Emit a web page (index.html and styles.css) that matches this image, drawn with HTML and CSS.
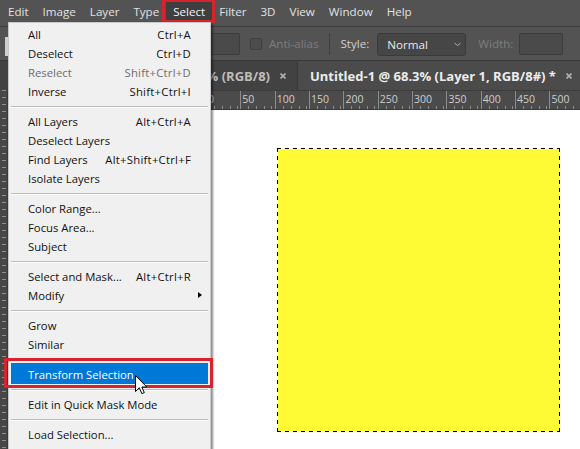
FILE: index.html
```html
<!DOCTYPE html>
<html lang="en">
<head>
<meta charset="UTF-8">
<title>Select menu</title>
<link rel="stylesheet" href="styles.css">
</head>
<body>
<div class="app">
  <div class="menubar">
    <span class="mb-item">Edit</span>
    <span class="mb-item">Image</span>
    <span class="mb-item">Layer</span>
    <span class="mb-item">Type</span>
    <span class="mb-item open">Select</span>
    <span class="mb-item">Filter</span>
    <span class="mb-item">3D</span>
    <span class="mb-item">View</span>
    <span class="mb-item">Window</span>
    <span class="mb-item">Help</span>
  </div>

  <div class="optionsbar">
    <div class="tool-stub"></div>
    <div class="field feather"></div>
    <span class="check"></span>
    <span class="opt-label dim">Anti-alias</span>
    <div class="vsep"></div>
    <span class="opt-label">Style:</span>
    <div class="dropdown-field">
      <span>Normal</span>
      <svg width="7" height="5" viewBox="0 0 7 5"><polyline points="0.5,0.8 3.5,3.8 6.5,0.8" fill="none" stroke="#b4b4b4" stroke-width="1"/></svg>
    </div>
    <span class="opt-label dim">Width:</span>
    <div class="field width"></div>
  </div>

  <div class="tabbar">
    <div class="tab">
      <span class="tab-title">% (RGB/8)</span>
      <svg class="tab-close" width="6" height="6" viewBox="0 0 6 6"><path d="M0.5 0.5L5.5 5.5M5.5 0.5L0.5 5.5" stroke="#b0b0b0" stroke-width="1.6"/></svg>
    </div>
    <div class="tab active">
      <span class="tab-title">Untitled-1 @ 68.3% (Layer 1, RGB/8#) *</span>
      <svg class="tab-close" width="6" height="6" viewBox="0 0 6 6"><path d="M0.5 0.5L5.5 5.5M5.5 0.5L0.5 5.5" stroke="#b0b0b0" stroke-width="1.6"/></svg>
    </div>
  </div>

  <div class="workspace">
    <div class="vruler"></div>
    <div class="doc">
      <div class="hruler">
        <span>0</span><span>50</span><span>100</span><span>150</span><span>200</span><span>250</span>
        <span>300</span><span>350</span><span>400</span><span>450</span><span>500</span><span></span>
      </div>
      <div class="canvas">
        <div class="selection"></div>
      </div>
    </div>
  </div>

  <div class="menu">
    <div class="item"><span>All</span><span class="key">Ctrl+A</span></div>
    <div class="item"><span>Deselect</span><span class="key">Ctrl+D</span></div>
    <div class="item disabled"><span>Reselect</span><span class="key">Shift+Ctrl+D</span></div>
    <div class="item"><span>Inverse</span><span class="key">Shift+Ctrl+I</span></div>
    <div class="sep"></div>
    <div class="item"><span>All Layers</span><span class="key">Alt+Ctrl+A</span></div>
    <div class="item"><span>Deselect Layers</span></div>
    <div class="item"><span>Find Layers</span><span class="key">Alt+Shift+Ctrl+F</span></div>
    <div class="item"><span>Isolate Layers</span></div>
    <div class="sep"></div>
    <div class="item"><span>Color Range...</span></div>
    <div class="item"><span>Focus Area...</span></div>
    <div class="item"><span>Subject</span></div>
    <div class="sep"></div>
    <div class="item"><span>Select and Mask...</span><span class="key">Alt+Ctrl+R</span></div>
    <div class="item sub"><span>Modify</span></div>
    <div class="sep"></div>
    <div class="item"><span>Grow</span></div>
    <div class="item"><span>Similar</span></div>
    <div class="sep"></div>
    <div class="item hot"><span>Transform Selection</span></div>
    <div class="sep"></div>
    <div class="item"><span>Edit in Quick Mask Mode</span></div>
    <div class="sep"></div>
    <div class="item"><span>Load Selection...</span></div>
    <div class="item"><span>Save Selection...</span></div>
  </div>

  <svg class="cursor" width="13" height="20" viewBox="0 0 13 20">
    <path d="M0.5 0.5L0.5 16.5L4.3 12.8L6.9 18.6L9.3 17.6L6.8 12L11.8 12Z" fill="#fff" stroke="#000" stroke-width="1" stroke-linejoin="round"/>
  </svg>
</div>
</body>
</html>
```

FILE: styles.css
```css
* { box-sizing: border-box; }
html, body { margin: 0; padding: 0; }
body { width: 580px; height: 449px; overflow: hidden; background: #535353; font-family: "Open Sans", "Noto Sans", sans-serif; }

.app { position: relative; width: 580px; height: 449px; overflow: hidden; display: flex; flex-direction: column; }

/* top menu bar */
.menubar { height: 27px; flex: none; display: flex; align-items: center; padding-left: 1px; background: #535353; border-bottom: 1px solid #3d3d3d; }
.mb-item { position: relative; padding: 0 7px; height: 20px; line-height: 20px; font-size: 11.6px; color: #e2e2e2; margin-top: -2px; }
.mb-item.open { background: #3f3f3f; color: #f2f2f2; }
.mb-item.open::after { content: ""; position: absolute; left: -4px; right: -3px; top: -3px; bottom: -1px; border: 3px solid #d9232c; border-radius: 1px; }

/* tool options */
.optionsbar { height: 33px; flex: none; display: flex; align-items: center; background: #535353; font-size: 11.6px; }
.tool-stub { width: 3px; height: 19px; margin-left: 5px; margin-top: 6px; background: #cfcfcf; }
.field { height: 22px; background: #4a4a4a; border: 1px solid #3c3c3c; border-radius: 2px; }
.field.feather { width: 96px; margin-left: 136px; }
.field.width { width: 44px; margin-left: 6px; }
.check { width: 12px; height: 12px; margin-left: 10px; border: 1px solid #3e3e3e; background: #4d4d4d; border-radius: 2px; }
.opt-label { color: #d0d0d0; margin-left: 7px; }
.opt-label.dim { color: #7d7d7d; }
.vsep { width: 1px; height: 22px; background: #3f3f3f; margin-left: 10px; margin-right: 4px; }
.dropdown-field { width: 89px; height: 23px; margin-left: 8px; margin-top: 1px; display: flex; align-items: center; justify-content: space-between; padding: 0 4px 0 9px; background: #464646; border: 1px solid #3a3a3a; border-radius: 3px; color: #e8e8e8; }
.dropdown-field + .opt-label { margin-left: 12px; }

/* document tabs */
.tabbar { height: 30px; flex: none; display: flex; background: #424242; border-top: 1px solid #3a3a3a; }
.tab { display: flex; align-items: center; font-size: 13px; font-weight: 700; color: #bdbdbd; }
.tab:first-child { width: 298px; justify-content: flex-end; padding-right: 11px; border-right: 1px solid #383838; white-space: nowrap; overflow: hidden; }
.tab.active { flex: 1; padding-left: 12px; background: #4b4b4b; color: #ececec; white-space: nowrap; }
.tab-close { margin-left: 10px; flex: none; }

/* rulers + canvas */
.workspace { flex: 1; display: flex; }
.vruler { width: 8px; flex: none; background: #474747 repeating-linear-gradient(180deg, #8f8f8f 0 1px, transparent 1px 7px); background-size: 4px 100%; background-repeat: no-repeat; background-position: 2px 0; border-right: 1px solid #3a3a3a; }
.doc { flex: 1; display: flex; flex-direction: column; }
.hruler { height: 20px; flex: none; display: flex; padding-left: 198px; background: #4b4b4b; border-top: 1px solid #3c3c3c; border-bottom: 1px solid #3a3a3a; white-space: nowrap; overflow: hidden; }
.hruler span { flex: none; width: 34.35px; padding-left: 1px; border-left: 1px solid #8c8c8c; font-size: 10.5px; line-height: 17px; color: #cdcdcd;
  background-image: repeating-linear-gradient(90deg, transparent 0 6.87px, #8c8c8c 6.87px 7.87px);
  background-size: 100% 3px; background-position: 0 100%; background-repeat: no-repeat; }
.canvas { flex: 1; background: #fff; padding: 38px 0 0 269px; }
.selection { width: 283px; height: 284px; background-color: #fefa34;
  background-image:
    repeating-linear-gradient(90deg, #000 0 4px, #fff 4px 8px),
    repeating-linear-gradient(90deg, #000 0 4px, #fff 4px 8px),
    repeating-linear-gradient(180deg, #000 0 4px, #fff 4px 8px),
    repeating-linear-gradient(180deg, #000 0 4px, #fff 4px 8px);
  background-size: 100% 1px, 100% 1px, 1px 100%, 1px 100%;
  background-position: 0 0, 0 100%, 0 0, 100% 0;
  background-repeat: no-repeat; }

/* open Select menu */
.menu { position: absolute; left: 8px; top: 22px; width: 203px; padding-top: 2px; background: #f0f0f0; border: 1px solid #c9c9c9; box-shadow: 2px 2px 2px rgba(0, 0, 0, 0.45); font-size: 11.3px; color: #111; }
.item { position: relative; height: 19px; margin: 0 2px; padding: 0 17px 0 17px; display: flex; align-items: center; justify-content: space-between; white-space: nowrap; }
.item .key { letter-spacing: 0.25px; }
.item.disabled { color: #6e6e6e; }
.item.sub::after { content: ""; position: absolute; right: 6px; top: 6px; border-left: 4px solid #000; border-top: 3.5px solid transparent; border-bottom: 3.5px solid transparent; }
.item.hot { background: #0078d7; color: #fff; box-shadow: 0 -2px 0 #0078d7; }
.item.hot::after { content: ""; position: absolute; left: -7px; right: -5px; top: -7px; bottom: -4px; border: 3px solid #d9232c; }
.sep { height: 11px; margin: 0 2px; padding-top: 5px; }
.sep::before { content: ""; display: block; height: 1px; background: #bdbdbd; border-bottom: 1px solid #fbfbfb; box-sizing: content-box; }

.cursor { position: absolute; left: 135px; top: 375px; }
```
